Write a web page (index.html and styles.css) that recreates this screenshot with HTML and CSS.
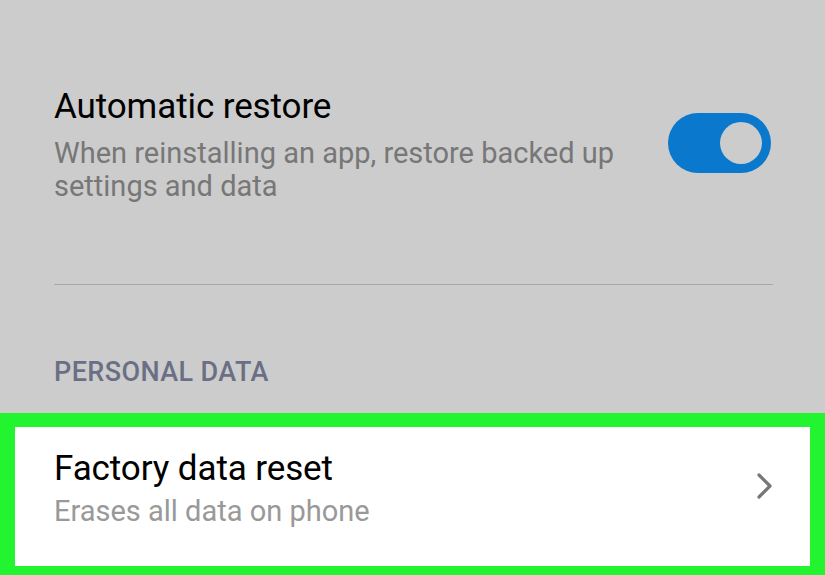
FILE: index.html
```html
<!DOCTYPE html>
<html>
<head>
<meta charset="utf-8">
<link rel="stylesheet" href="styles.css">
</head>
<body>
<div class="screen">
  <div class="row restore">
    <div class="texts">
      <div class="title">Automatic restore</div>
      <div class="sub">When reinstalling an app, restore backed up settings and data</div>
    </div>
    <div class="toggle"><div class="knob"></div></div>
  </div>
  <div class="divider"></div>
  <div class="section">PERSONAL DATA</div>
  <div class="highlight">
    <div class="row reset">
      <div class="texts">
        <div class="title">Factory data reset</div>
        <div class="sub light">Erases all data on phone</div>
      </div>
      <svg class="chev" width="16" height="26" viewBox="0 0 16 26"><path d="M2 2 L13 13 L2 24" fill="none" stroke="#777" stroke-width="3.2" stroke-linecap="round" stroke-linejoin="round"/></svg>
    </div>
  </div>
</div>
</body>
</html>
```
FILE: styles.css
```css
html, body { margin: 0; padding: 0; }
body { width: 825px; height: 575px; overflow: hidden; background: #cccccc; font-family: Roboto, "Noto Sans", sans-serif; }
.screen { display: flex; flex-direction: column; height: 575px; }
.row { display: flex; align-items: flex-start; justify-content: space-between; }
.restore { padding: 85px 54px 0 54px; }
.texts { display: flex; flex-direction: column; }
.title { font-size: 35px; color: #000; line-height: 44px; letter-spacing: -0.1px; }
.sub { font-size: 29px; color: #777; line-height: 33px; width: 600px; margin-top: 8px; }
.sub.light { color: #999; width: auto; margin-top: 4px; }
.toggle { width: 103px; height: 60px; border-radius: 30px; background: #0a78cc; margin-top: 28px; display: flex; align-items: center; justify-content: flex-end; padding-right: 9px; box-sizing: border-box; }
.knob { width: 42px; height: 42px; border-radius: 50%; background: #cccccc; }
.divider { height: 1px; background: #a8a8a8; margin: 81px 52px 0 54px; }
.section { font-size: 27px; font-weight: 500; color: #6b6f85; padding: 0 54px; margin-top: 72px; line-height: 30px; letter-spacing: 0.4px; }
.highlight { margin-top: 26px; border: solid #22f530; border-width: 14px 15px 9px 15px; background: #fff; flex: 1; }
.reset { padding: 20px 37px 0 39px; }
.chev { margin-top: 26px; }
```
